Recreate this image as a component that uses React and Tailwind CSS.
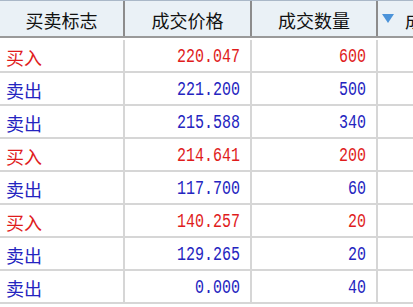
import React from 'react';

const rows = [
  { side: 'buy', price: '220.047', qty: '600' },
  { side: 'sell', price: '221.200', qty: '500' },
  { side: 'sell', price: '215.588', qty: '340' },
  { side: 'buy', price: '214.641', qty: '200' },
  { side: 'sell', price: '117.700', qty: '60' },
  { side: 'buy', price: '140.257', qty: '20' },
  { side: 'sell', price: '129.265', qty: '20' },
  { side: 'sell', price: '0.000', qty: '40' },
];

const cjk = { fontFamily: '"Noto Sans CJK SC", "Noto Sans", sans-serif' };
const mono = { fontFamily: '"Liberation Mono", "DejaVu Sans Mono", monospace' };

const App = () => {
  return (
    <div className="w-[413px] h-[307px] overflow-hidden bg-white" style={cjk}>
      {/* Header */}
      <div className="flex h-[38px] border-t border-[#aab8c8] border-b-2 border-b-[#9a9a9a] bg-[#eaf1f6] text-[18px] leading-none text-[#111]">
        <div className="w-[125px] shrink-0 border-r-2 border-[#8c8c8c] flex items-center justify-center pt-[3px]">买卖标志</div>
        <div className="w-[127px] shrink-0 border-r-2 border-[#8c8c8c] flex items-center justify-center pt-[3px]">成交价格</div>
        <div className="w-[126px] shrink-0 border-r-2 border-[#8c8c8c] flex items-center justify-center pt-[3px]">成交数量</div>
        <div className="flex-1 min-w-0 flex items-center pl-[4px] pt-[3px] overflow-hidden whitespace-nowrap">
          <svg width="12" height="10" viewBox="0 0 12 10" className="shrink-0 mb-[3px]">
            <polygon points="0,0 12,0 6,9" fill="#4b93d9" />
          </svg>
          <span className="ml-[11px] text-[18px]">成交</span>
        </div>
      </div>

      {/* Body */}
      <div className="pt-[2px]">
        {rows.map((r, i) => {
          const color = r.side === 'buy' ? 'text-[#e01c1c]' : 'text-[#2424c0]';
          return (
            <div key={i} className={`flex h-[33px] border-b-2 border-[#d6d6d6] ${color}`}>
              <div className="w-[125px] shrink-0 border-r-2 border-[#d6d6d6] flex items-center pl-[6px] pt-[3px] text-[18px] leading-none">
                {r.side === 'buy' ? '买入' : '卖出'}
              </div>
              <div className="w-[127px] shrink-0 border-r-2 border-[#d6d6d6] flex items-center justify-end pr-[10px] pt-[3px] text-[15px] leading-none" style={mono}>
                <span className="inline-block scale-y-[1.3]">{r.price}</span>
              </div>
              <div className="w-[126px] shrink-0 border-r-2 border-[#d6d6d6] flex items-center justify-end pr-[10px] pt-[3px] text-[15px] leading-none" style={mono}>
                <span className="inline-block scale-y-[1.3]">{r.qty}</span>
              </div>
              <div className="flex-1" />
            </div>
          );
        })}
      </div>
    </div>
  );
};

export default App;
